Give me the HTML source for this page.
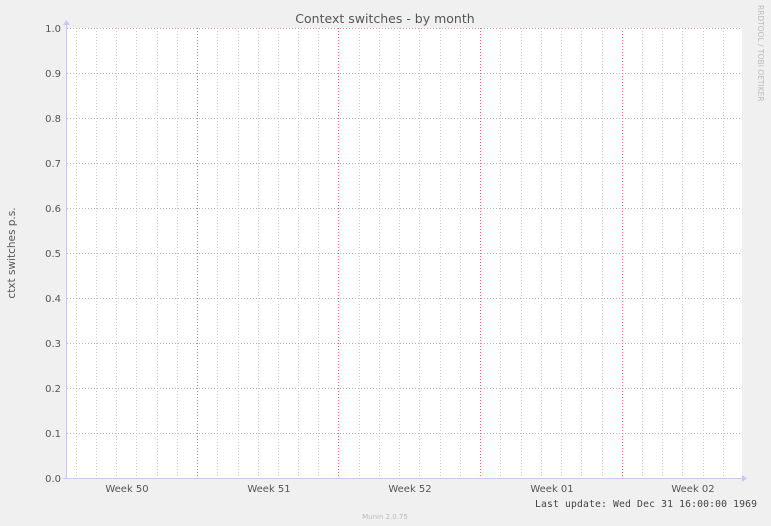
<!DOCTYPE html>
<html><head><meta charset="utf-8"><style>
html,body{margin:0;padding:0;background:#f0f0f0;}
svg{display:block;}
text{font-family:"DejaVu Sans","Liberation Sans",sans-serif;}
</style></head><body>
<svg width="771" height="526" viewBox="0 0 771 526" xmlns="http://www.w3.org/2000/svg">
<rect width="771" height="526" fill="#f0f0f0"/>
<rect x="67" y="28" width="675" height="450" fill="#ffffff"/>
<g stroke="#cfcfcf" stroke-width="1" stroke-dasharray="1,2">
<path d="M76.5 28V478M96.5 28V478M116.5 28V478M136.5 28V478M157.5 28V478M177.5 28V478M217.5 28V478M238.5 28V478M258.5 28V478M278.5 28V478M298.5 28V478M318.5 28V478M359.5 28V478M379.5 28V478M399.5 28V478M419.5 28V478M440.5 28V478M460.5 28V478M500.5 28V478M521.5 28V478M541.5 28V478M561.5 28V478M581.5 28V478M602.5 28V478M642.5 28V478M662.5 28V478M682.5 28V478M703.5 28V478M723.5 28V478"/>
</g>
<g stroke="#b8b8b8" stroke-width="1" stroke-dasharray="1,2">
<path d="M67 73.5H742M67 118.5H742M67 163.5H742M67 208.5H742M67 253.5H742M67 298.5H742M67 343.5H742M67 388.5H742M67 433.5H742"/>
</g>
<g stroke="#f07070" stroke-width="1" stroke-dasharray="1,2">
<path d="M197.5 28V478M338.5 28V478M480.5 28V478M622.5 28V478"/>
</g>
<path d="M67 28.5H742" stroke="#e0a0a0" stroke-dasharray="1,2"/>
<path d="M66.5 24V479M63 478.5H744" stroke="#c8c8f0" stroke-width="1"/>
<path d="M63 25L66.5 20L70 25Z M742 475L747 478.5L742 482Z" fill="#c8c8f0"/>
<g font-size="10" fill="#555" text-anchor="end">
<text x="61" y="32">1.0</text><text x="61" y="77">0.9</text><text x="61" y="122">0.8</text><text x="61" y="167">0.7</text><text x="61" y="212">0.6</text><text x="61" y="257">0.5</text><text x="61" y="302">0.4</text><text x="61" y="347">0.3</text><text x="61" y="392">0.2</text><text x="61" y="437">0.1</text><text x="61" y="482">0.0</text>
</g>
<g font-size="10" fill="#555" text-anchor="middle">
<text x="127" y="492">Week 50</text><text x="269" y="492">Week 51</text><text x="410" y="492">Week 52</text><text x="552" y="492">Week 01</text><text x="693" y="492">Week 02</text>
</g>
<text x="385" y="23" font-size="12.5" fill="#555" text-anchor="middle">Context switches - by month</text>
<text transform="translate(15,253) rotate(-90)" font-size="10.5" fill="#555" text-anchor="middle">ctxt switches p.s.</text>
<text transform="translate(758,5) rotate(90)" font-size="7.5" fill="#bbb">RRDTOOL / TOBI OETIKER</text>
<text x="757" y="507" font-size="9.75" fill="#444" text-anchor="end" textLength="222" style="font-family:'DejaVu Sans Mono','Liberation Mono',monospace">Last update: Wed Dec 31 16:00:00 1969</text>
<text x="385" y="519" font-size="7" fill="#bbb" text-anchor="middle">Munin 2.0.75</text>
</svg>
</body></html>
